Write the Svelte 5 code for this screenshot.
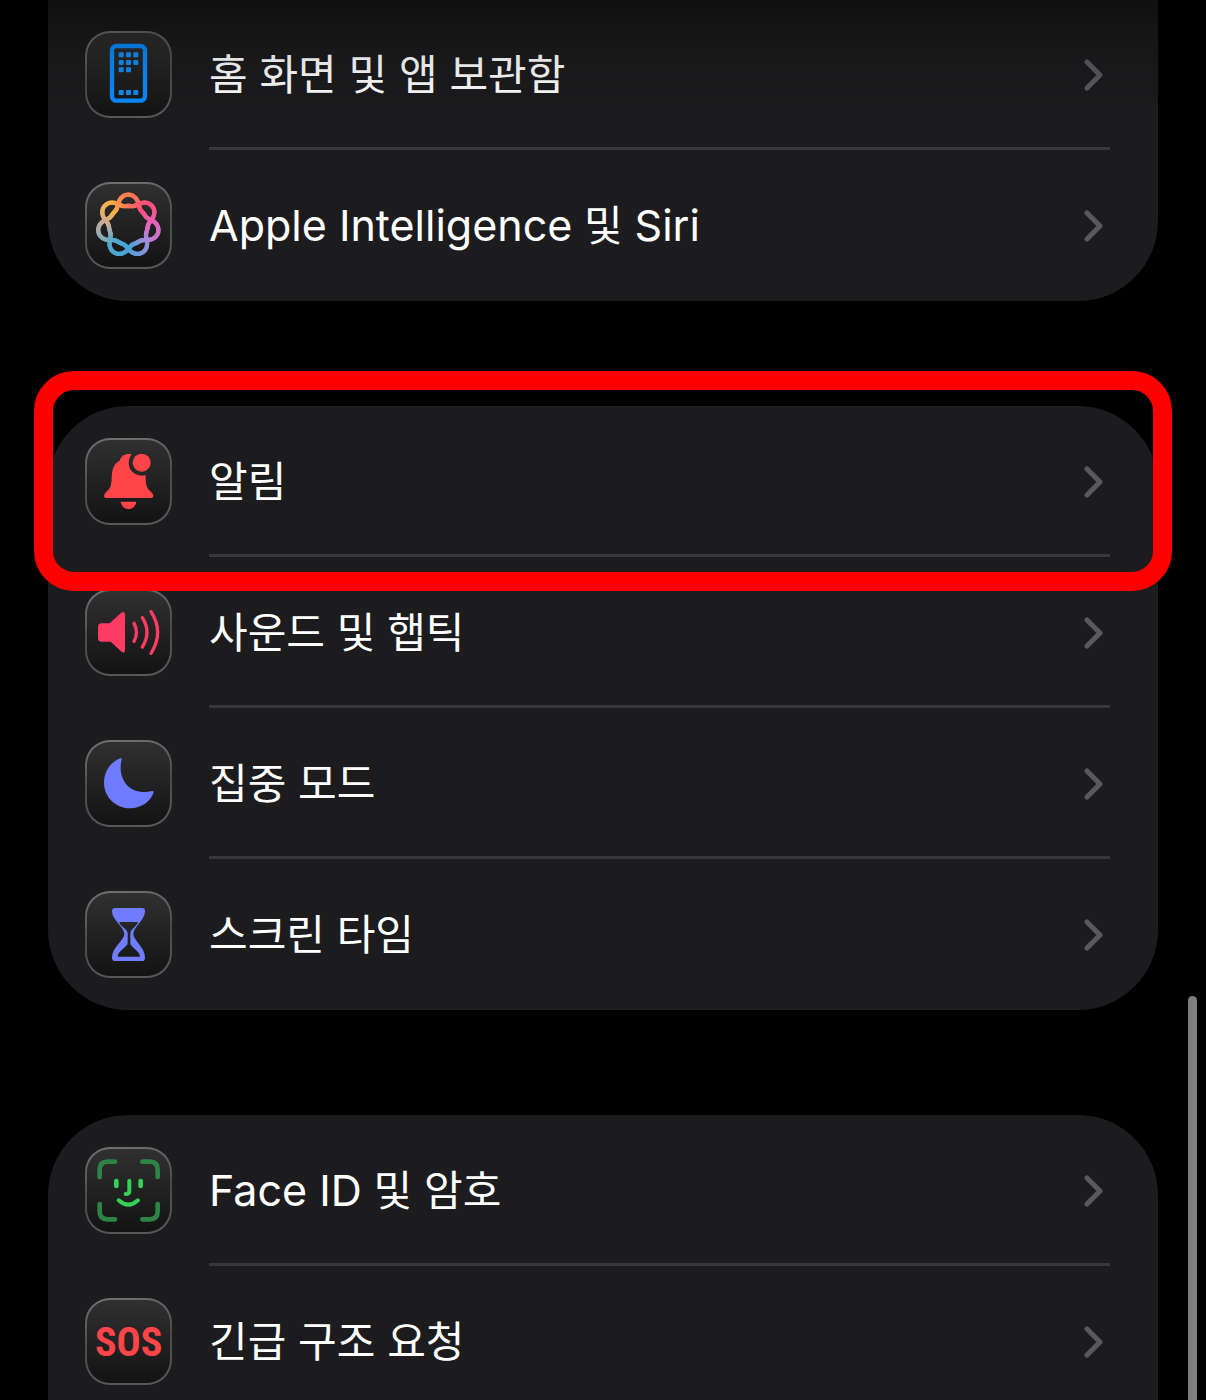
<script lang="ts">
  type Icon = "home" | "siri" | "bell" | "sound" | "moon" | "hourglass" | "face" | "sos";

  interface Row {
    icon: Icon;
    latin?: string;
    label: string;
    tail?: string;
    marked?: boolean;
  }

  const groups: Row[][] = [
    [
      { icon: "home", label: "홈 화면 및 앱 보관함" },
      { icon: "siri", latin: "Apple Intelligence", label: " 및 ", tail: "Siri" },
    ],
    [
      { icon: "bell", label: "알림", marked: true },
      { icon: "sound", label: "사운드 및 햅틱" },
      { icon: "moon", label: "집중 모드" },
      { icon: "hourglass", label: "스크린 타임" },
    ],
    [
      { icon: "face", latin: "Face ID", label: " 및 암호" },
      { icon: "sos", label: "긴급 구조 요청" },
    ],
  ];

  // colours around the seven-lobed knot, clockwise from the top
  const wheel = [
    [255, 122, 84],
    [255, 78, 124],
    [230, 100, 190],
    [160, 140, 220],
    [70, 165, 215],
    [80, 170, 205],
    [190, 170, 160],
    [252, 178, 72],
  ];

  function knotPoint(t: number) {
    const r = 71 + 17 * Math.cos(3.5 * t) + 4 * Math.cos(7 * t);
    // widens the outer lobes a little
    const a = t + 0.05 * Math.sin(3.5 * t) + 0.03 * Math.sin(7 * t);
    return `${(130 + r * Math.sin(a)).toFixed(1)} ${(130 - r * Math.cos(a)).toFixed(1)}`;
  }

  function knotColor(t: number) {
    const pos = ((t / (2 * Math.PI)) % 1) * wheel.length;
    const i = Math.floor(pos);
    const next = wheel[(i + 1) % wheel.length];
    const mix = wheel[i].map((c, k) => Math.round(c + (next[k] - c) * (pos - i)));
    return `rgb(${mix.join(",")})`;
  }

  const steps = 224;
  const knot = Array.from({ length: steps }, (_, i) => {
    const t = (i / steps) * 4 * Math.PI;
    const end = ((i + 1) / steps) * 4 * Math.PI;
    return { d: `M${knotPoint(t)}L${knotPoint(end)}`, color: knotColor(t) };
  });

  const dots = [
    [101, 64], [123, 64], [145, 64],
    [101, 87], [123, 87], [145, 87],
    [101, 109], [123, 109],
    [101, 177], [123, 177], [145, 177],
  ];
</script>

{#snippet glyph(icon: Icon)}
  <svg viewBox="0 0 261 261" aria-hidden="true">
    {#if icon === "home"}
      <rect x="81" y="45" width="99" height="164" rx="13" fill="none" stroke="#0a8cff" stroke-width="13" />
      {#each dots as [x, y]}
        <rect {x} {y} width="15" height="15" rx="3" fill="#0f90fc" />
      {/each}
    {:else if icon === "siri"}
      {#each knot as seg}
        <path d={seg.d} stroke={seg.color} stroke-width="13" stroke-linecap="round" />
      {/each}
    {:else if icon === "bell"}
      <mask id="badge-gap">
        <rect width="261" height="261" fill="#fff" />
        <circle cx="170" cy="74" r="39" fill="#000" />
      </mask>
      <g fill="#ff4549">
        <path
          mask="url(#badge-gap)"
          d="M64 180Q57 180 57 174Q58 168 63 163C76 150 79 146 80 120C81 92 86 78 104 68C108 54 118 48 131 48C144 48 154 54 158 68C176 78 181 92 182 120C183 146 186 150 199 163Q205 168 205 174Q205 180 198 180Z"
        />
        <circle cx="170" cy="74" r="27" />
        <path d="M107 191H154C152 205 142 213 131 213C119 213 109 205 107 191Z" />
      </g>
    {:else if icon === "sound"}
      <path
        fill="#ff3b63"
        d="M50 103H74L107 73Q120 63 120 77V183Q120 197 107 186L77 158H50Q39 158 39 147V114Q39 103 50 103Z"
      />
      <g fill="none" stroke="#ff3b63" stroke-width="10" stroke-linecap="round">
        <path d="M147 103Q162 130 147 157" />
        <path d="M172 86Q200 130 172 174" />
        <path d="M198 68Q238 130 198 193" />
      </g>
    {:else if icon === "moon"}
      <path
        fill="#6e7aff"
        d="M106 55Q111 53 110 59C104 82 106 112 125 134C143 154 172 160 201 153Q207 152 206 157C198 184 169 205 136 205C92 205 57 171 57 128C57 93 77 66 106 55Z"
      />
    {:else if icon === "hourglass"}
      <path
        fill="#707cff"
        fill-rule="evenodd"
        d="M91 51H171Q180 51 180 60C180 88 145 108 145 129C145 148 180 168 180 200Q180 210 171 210H91Q81 210 81 200C81 168 118 148 118 129C118 108 81 88 81 60Q81 51 91 51ZM103 93Q103 98 109 104L123 116Q128 121 128 127V155Q128 161 123 165L104 183Q98 189 98 197H165Q165 189 158 182L141 166Q136 161 136 155V127Q136 121 140 117L152 104Q158 98 159 93Z"
      />
    {:else if icon === "face"}
      <g fill="none" stroke-linecap="round">
        <path
          stroke="#2e8447"
          stroke-width="14"
          d="M44 90V68Q44 44 68 44H90M172 44H194Q218 44 218 68V90M44 171V193Q44 217 68 217H90M172 217H194Q218 217 218 193V171"
        />
        <g stroke="#32d158">
          <path stroke-width="14" d="M94 102V117M167 102V117" />
          <path stroke-width="12" d="M133 101V133Q133 141 122 141M101 160Q130 186 159 160" />
        </g>
      </g>
    {:else}
      <text x="131" y="175" text-anchor="middle">SOS</text>
    {/if}
  </svg>
{/snippet}

<main>
  {#each groups as rows}
    <ul>
      {#each rows as row}
        <li>
          <a href="#{row.icon}">
            <span class="tile">{@render glyph(row.icon)}</span>
            <span class="content">
              <span class="label">
                {#if row.latin}<span class="latin">{row.latin}</span>{/if}{row.label}{#if row.tail}<span class="latin">{row.tail}</span>{/if}
              </span>
              <svg class="chevron" viewBox="0 0 19 32" aria-hidden="true">
                <path d="M3 3L16 16L3 29" />
              </svg>
            </span>
          </a>
          {#if row.marked}<span class="marker"></span>{/if}
        </li>
      {/each}
    </ul>
  {/each}
</main>
<div class="fade"></div>
<div class="scrollbar"></div>

<style>
  :global(body) {
    margin: 0;
    background: #000;
  }

  main {
    box-sizing: border-box;
    height: 100vh;
    overflow: hidden;
    padding: 0 48px;
    background: #000;
    color: #fff;
    font-family: Inter, "Noto Sans CJK KR", sans-serif;
    font-size: 42px;
  }

  ul {
    list-style: none;
    margin: 0 0 105px;
    padding: 0;
    background: #1c1c1e;
    border-radius: 80px;
  }

  /* the first and last groups run on past the screen edges */
  ul:first-child {
    margin-top: -1px;
    border-top-left-radius: 0;
    border-top-right-radius: 0;
  }

  ul:last-child {
    margin-bottom: 0;
    border-bottom-left-radius: 0;
    border-bottom-right-radius: 0;
  }

  li {
    position: relative;
  }

  a {
    display: flex;
    align-items: center;
    gap: 37px;
    height: 151px;
    padding: 0 48px 0 37px;
    color: inherit;
    text-decoration: none;
  }

  .tile {
    box-sizing: border-box;
    flex: none;
    width: 87px;
    height: 87px;
    border: 2px solid transparent;
    border-radius: 25px;
    background:
      linear-gradient(#303030, #131313) padding-box,
      linear-gradient(170deg, #747474, #4a4a4a 50%, #5a5a5a) border-box;
  }

  .tile svg {
    display: block;
    width: 87px;
    height: 87px;
    margin: -2px;
  }

  .tile text {
    fill: #ff4549;
    font-family: "Liberation Sans Narrow", "Roboto Condensed", Roboto, sans-serif;
    font-size: 120px;
    font-weight: 700;
  }

  .content {
    box-sizing: border-box;
    flex: 1;
    display: flex;
    align-items: center;
    justify-content: space-between;
    height: 100%;
    padding: 3px 7px 0 0;
    border-bottom: 3px solid #38383a;
  }

  li:last-child .content {
    border-color: transparent;
  }

  .label {
    line-height: 60px;
    white-space: pre;
  }

  .latin {
    font-size: 43px;
  }

  .chevron {
    width: 19px;
    height: 32px;
    fill: none;
    stroke: #5a5a5e;
    stroke-width: 5;
    stroke-linecap: round;
    stroke-linejoin: round;
  }

  .marker {
    position: absolute;
    z-index: 1;
    inset: -35px -14px -34px;
    border: 19px solid #f00;
    border-radius: 40px;
    pointer-events: none;
  }

  .fade {
    position: fixed;
    inset: 0 0 auto;
    height: 120px;
    background: linear-gradient(rgba(0, 0, 0, 0.42), rgba(0, 0, 0, 0.12) 45%, transparent);
    pointer-events: none;
  }

  .scrollbar {
    position: fixed;
    top: 996px;
    right: 9px;
    bottom: 0;
    width: 9px;
    border-radius: 5px 5px 0 0;
    background: #7f7f7f;
  }
</style>
